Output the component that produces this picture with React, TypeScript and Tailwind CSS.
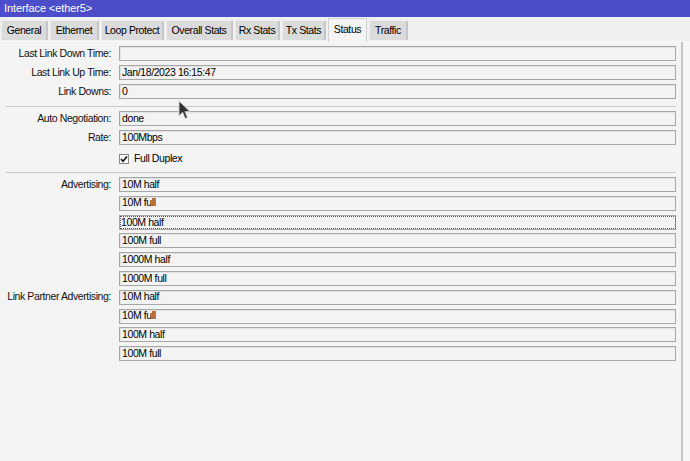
const tabs = [
  { name: "General", w: "w-[47px]" },
  { name: "Ethernet", w: "w-[49px]" },
  { name: "Loop Protect", w: "w-[63px]" },
  { name: "Overall Stats", w: "w-[67px]" },
  { name: "Rx Stats", w: "w-[45px]" },
  { name: "Tx Stats", w: "w-[44px]" },
  { name: "Status", w: "w-[39px]", active: true },
  { name: "Traffic", w: "w-[39px]" },
];

function Field({ label, value, focused }: { label?: string; value: string; focused?: boolean }) {
  return (
    <div className="flex items-center h-[15px]">
      <div className="w-[111px] text-right text-[#111] whitespace-nowrap">{label ? `${label}:` : ""}</div>
      <div
        className={
          focused
            ? "ml-[8px] w-[557px] h-[15px] border border-[#a7a7a7] bg-[#f3f3f3] flex items-center pl-[1px]"
            : "ml-[8px] w-[557px] h-[15px] border border-[#a7a7a7] bg-[#f3f3f3] shadow-[inset_1px_1px_0_#e2e2e2] flex items-center pl-[2px]"
        }
      >
        <span className={focused ? "outline outline-1 outline-dotted outline-[#555] w-full h-[11px] leading-[11px]" : ""}>{value}</span>
      </div>
    </div>
  );
}

function Separator() {
  return <div className="ml-[6px] w-[670px] h-px bg-[#c9c9c9]" />;
}

export default function App() {
  return (
    <div className="relative w-[690px] h-[461px] bg-[#f4f4f4] flex flex-col overflow-hidden font-['Liberation_Sans',Arial,sans-serif] text-[10.5px] tracking-[-0.4px] text-black">
      {/* title */}
      <div className="h-[17px] bg-[#4b4dc9] text-white text-[11px] tracking-[-0.1px] flex items-center pl-[4px]">
        Interface &lt;ether5&gt;
      </div>

      {/* tabs */}
      <div className="h-[25px] bg-[#f0f0f0] flex items-end gap-[2px] pl-[1px] border-b border-[#fafafa]">
        {tabs.map((t) =>
          t.active ? (
            <div
              key={t.name}
              className={`${t.w} h-[24px] bg-[#f4f4f4] border-l border-r border-t border-[#d0d0d0] flex items-start justify-center pt-[3px] -mb-px`}
            >
              {t.name}
            </div>
          ) : (
            <div
              key={t.name}
              className={`${t.w} h-[19px] bg-[#dbdbdb] border-l border-[#ececec] border-r-2 border-r-[#c6c6c6] flex items-center justify-center mb-[1px]`}
            >
              {t.name}
            </div>
          )
        )}
      </div>

      {/* body */}
      <div className="flex flex-1">
        <div className="w-[681px] pt-[4px] flex flex-col">
          <div className="flex flex-col gap-[4px]">
            <Field label="Last Link Down Time" value="" />
            <Field label="Last Link Up Time" value="Jan/18/2023 16:15:47" />
            <Field label="Link Downs" value="0" />
          </div>
          <div className="mt-[7px] mb-[4px]">
            <Separator />
          </div>
          <div className="flex flex-col gap-[4px]">
            <Field label="Auto Negotiation" value="done" />
            <Field label="Rate" value="100Mbps" />
          </div>
          <div className="flex items-center h-[11px] mt-[8px] ml-[119px]">
            <div className="w-[10px] h-[10px] border border-[#8a8a8a] bg-[#f8f8f8] flex items-center justify-center">
              <svg width="8" height="8" viewBox="0 0 8 8">
                <path d="M1 4 L3 6.3 L7 1.5" stroke="#111" strokeWidth="1.6" fill="none" />
              </svg>
            </div>
            <span className="ml-[5px]">Full Duplex</span>
          </div>
          <div className="mt-[8px] mb-[4px]">
            <Separator />
          </div>
          <div className="flex flex-col gap-[3.8px]">
            <Field label="Advertising" value="10M half" />
            <Field value="10M full" />
            <Field value="100M half" focused />
            <Field value="100M full" />
            <Field value="1000M half" />
            <Field value="1000M full" />
            <Field label="Link Partner Advertising" value="10M half" />
            <Field value="10M full" />
            <Field value="100M half" />
            <Field value="100M full" />
          </div>
        </div>
        <div className="w-[2px] bg-[#c3c3c3]" />
        <div className="flex-1 bg-[#f6f6f6]" />
      </div>

      {/* mouse pointer */}
      <svg className="absolute left-[178px] top-[100px]" width="13" height="21" viewBox="0 0 13 21">
        <path d="M1 1 L1 16 L4.6 12.3 L7.2 18.5 L9.5 17.5 L7 11.6 L12 11.6 Z" fill="#333" stroke="#dcdcdc" strokeWidth="0.8" />
      </svg>
    </div>
  );
}
